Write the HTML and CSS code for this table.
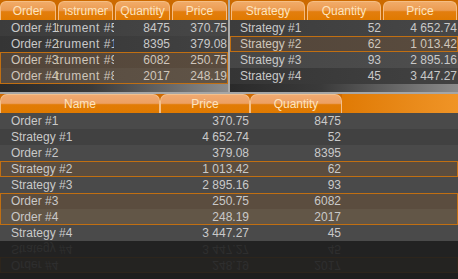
FILE: index.html
```
<!DOCTYPE html>
<html>
<head>
<meta charset="utf-8">
<link rel="stylesheet" href="styles.css">
</head>
<body>
<div class="app">
  <div class="top">
    <section class="grid gl">
      <div class="hdr">
        <div class="tab"><div class="lbl"><span>Order</span></div></div>
        <div class="tab"><div class="lbl"><span>Instrument</span></div></div>
        <div class="tab"><div class="lbl"><span>Quantity</span></div></div>
        <div class="tab"><div class="lbl"><span>Price</span></div></div>
      </div>
      <div class="row r1"><div class="c">Order #1</div><div class="c ins"><span>Instrument #5</span></div><div class="c n">8475</div><div class="c n">370.75</div></div>
      <div class="row r2"><div class="c">Order #2</div><div class="c ins"><span>Instrument #1</span></div><div class="c n">8395</div><div class="c n">379.08</div></div>
      <div class="sel">
        <div class="row s1"><div class="c">Order #3</div><div class="c ins"><span>Instrument #9</span></div><div class="c n">6082</div><div class="c n">250.75</div></div>
        <div class="row s2"><div class="c">Order #4</div><div class="c ins"><span>Instrument #8</span></div><div class="c n">2017</div><div class="c n">248.19</div></div>
      </div>
      <div class="fill"></div>
    </section>
    <div class="sep"></div>
    <section class="grid gr">
      <div class="hdr">
        <div class="tab"><div class="lbl"><span>Strategy</span></div></div>
        <div class="tab"><div class="lbl"><span>Quantity</span></div></div>
        <div class="tab"><div class="lbl"><span>Price</span></div></div>
      </div>
      <div class="row r1"><div class="c">Strategy #1</div><div class="c n">52</div><div class="c n">4 652.74</div></div>
      <div class="sel">
        <div class="row s1"><div class="c">Strategy #2</div><div class="c n">62</div><div class="c n">1 013.42</div></div>
      </div>
      <div class="row r3"><div class="c">Strategy #3</div><div class="c n">93</div><div class="c n">2 895.16</div></div>
      <div class="row r2"><div class="c">Strategy #4</div><div class="c n">45</div><div class="c n">3 447.27</div></div>
      <div class="fill"></div>
    </section>
  </div>

  <section class="bottom">
    <div class="bhdr">
      <div class="tab"><div class="lbl"><span>Name</span></div></div>
      <div class="tab"><div class="lbl"><span>Price</span></div></div>
      <div class="tab"><div class="lbl"><span>Quantity</span></div></div>
      <div class="rest"></div>
    </div>
    <div class="brow a"><div class="c">Order #1</div><div class="c n">370.75</div><div class="c n">8475</div><div></div></div>
    <div class="brow b"><div class="c">Strategy #1</div><div class="c n">4 652.74</div><div class="c n">52</div><div></div></div>
    <div class="brow a"><div class="c">Order #2</div><div class="c n">379.08</div><div class="c n">8395</div><div></div></div>
    <div class="sel">
      <div class="brow s1"><div class="c">Strategy #2</div><div class="c n">1 013.42</div><div class="c n">62</div><div></div></div>
    </div>
    <div class="brow a"><div class="c">Strategy #3</div><div class="c n">2 895.16</div><div class="c n">93</div><div></div></div>
    <div class="sel">
      <div class="brow s1"><div class="c">Order #3</div><div class="c n">250.75</div><div class="c n">6082</div><div></div></div>
      <div class="brow s2"><div class="c">Order #4</div><div class="c n">248.19</div><div class="c n">2017</div><div></div></div>
    </div>
    <div class="brow a"><div class="c">Strategy #4</div><div class="c n">3 447.27</div><div class="c n">45</div><div></div></div>

    <div class="refl" aria-hidden="true">
      <div class="sel">
        <div class="brow s2"><div class="c">Order #4</div><div class="c n">248.19</div><div class="c n">2017</div><div></div></div>
      </div>
      <div class="brow a"><div class="c">Strategy #4</div><div class="c n">3 447.27</div><div class="c n">45</div><div></div></div>
    </div>
  </section>
</div>
</body>
</html>
```
FILE: styles.css
```
html, body {
  margin: 0;
  padding: 0;
  background: #1e1e1e;
}
body {
  font-family: "Liberation Sans", Arial, sans-serif;
  font-size: 12px;
}
.app {
  width: 458px;
  height: 279px;
  overflow: hidden;
}

/* ---------- top area ---------- */
.top {
  display: flex;
  height: 92px;
  border-bottom: 2px solid #a6a6a6;
}
.sep {
  width: 2px;
  background: #a9a9a9;
}
.grid {
  width: 228px;
  display: flex;
  flex-direction: column;
  background: linear-gradient(90deg, #2a2a2a 0%, #3a3a3a 40%, #8c8c8c 100%);
}
.hdr {
  display: grid;
  height: 20px;
  padding-top: 1px;
  box-sizing: border-box;
  background: #cc6a00;
  flex: none;
}
.gl .hdr, .gl .row { grid-template-columns: repeat(4, 57px); }
.gr .hdr, .gr .row { grid-template-columns: 76px 76px 76px; }

.tab {
  margin: 0 1px;
  border: 1px solid #f6bd82;
  border-bottom: none;
  border-radius: 6px 6px 0 0;
  background: linear-gradient(180deg, #f1ab68 0%, #ec9c52 46%, #e37e0e 54%, #e07a00 100%);
  color: #fde4bf;
  display: flex;
  justify-content: center;
  align-items: center;
  overflow: hidden;
  white-space: nowrap;
  line-height: 16px;
}
.gl .tab:first-child { margin-left: 0; }
.lbl {
  width: calc(100% - 8px);
  display: flex;
  justify-content: center;
  overflow: hidden;
}
.lbl span { flex: none; }

.row {
  display: grid;
  height: 16px;
  line-height: 16px;
  color: #c9c9c9;
  flex: none;
}
.c {
  padding-left: 11px;
  overflow: hidden;
  white-space: nowrap;
}
.gr .c { padding-left: 10px; }
.c.n {
  text-align: right;
  padding-left: 0;
  padding-right: 1px;
}
.c.ins {
  padding-left: 0;
  display: flex;
  justify-content: flex-end;
}
.c.ins span {
  flex: none;
  margin-right: -4px;
  letter-spacing: 0.5px;
}
.r1 { background: linear-gradient(90deg, #3c3c3c, #474747); }
.r2 { background: linear-gradient(90deg, #353535, #424242); }
.r3 { background: linear-gradient(90deg, #464646, #4e4e4e); }
.s1 { background: linear-gradient(90deg, #52453a, #5a4c3e); color: #cfc6bc; }
.s2 { background: linear-gradient(90deg, #574b40, #605447); color: #cfc6bc; }

.sel {
  outline: 1px solid #c16f12;
  outline-offset: -1px;
}
.fill { flex: 1; }

/* ---------- bottom grid ---------- */
.bottom {
  display: flex;
  flex-direction: column;
}
.bhdr, .brow {
  display: grid;
  grid-template-columns: 160px 90px 92px 1fr;
}
.bhdr {
  height: 19px;
  background: #cf6a00;
}
.bhdr .tab {
  margin: 0;
  border-radius: 7px 7px 0 0;
  border-color: #f3c08c;
  background: linear-gradient(180deg, #f0a970 0%, #eda062 46%, #e27c06 54%, #e07a00 100%);
}
.bhdr .rest {
  background: linear-gradient(90deg, #e07a04 0%, #e98a1a 60%, #f09426 100%);
}
.brow {
  height: 16px;
  line-height: 16px;
  color: #c9c9c9;
}
.brow.a { background: #4a4a4a; }
.brow.b { background: #414141; }
.brow.s1 { background: #5b4d3f; }
.brow.s2 { background: #625647; }

.refl {
  transform: scaleY(-1);
  opacity: 0.09;
}
```
